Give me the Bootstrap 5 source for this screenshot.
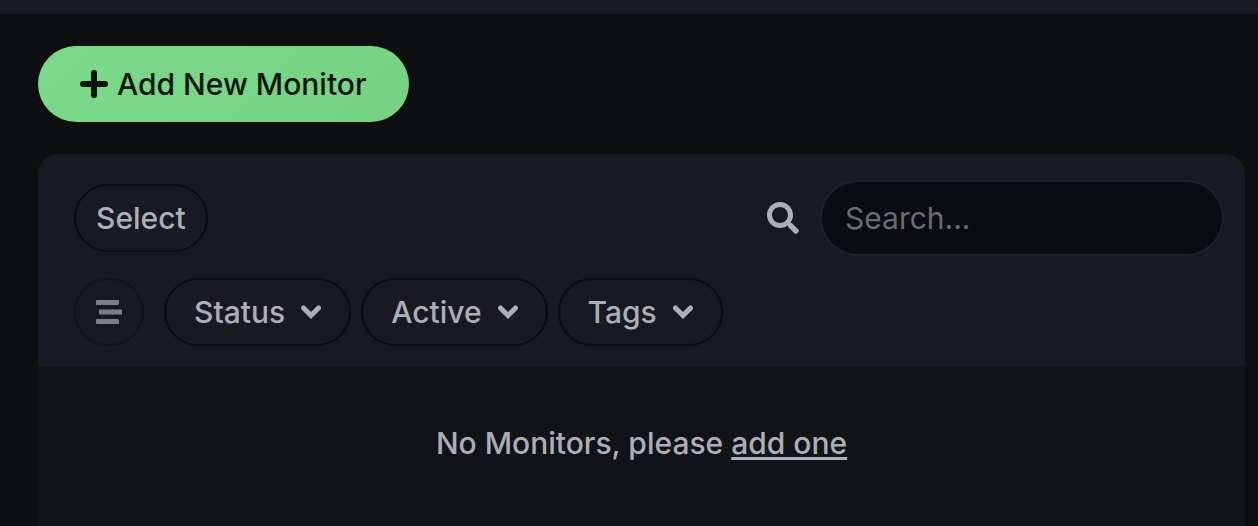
<!DOCTYPE html>
<html lang="en" data-bs-theme="dark">
<head>
<meta charset="utf-8">
<meta name="viewport" content="width=device-width, initial-scale=1">
<title>Monitors</title>
<link href="https://cdn.jsdelivr.net/npm/bootstrap@5.3.0/dist/css/bootstrap.min.css" rel="stylesheet">
<style>
  body { background: #0d0f11; color: #abafb6; font-family: Inter, "Liberation Sans", sans-serif; font-size: 30px; font-weight: 450; line-height: 48px; }
  .top-bar { height: 14px; background: #191a22; }
  .page { padding: 32px 13px 0 38px; gap: 32px; }
  .btn { font-size: 30px; font-weight: 450; line-height: 48px; }
  .btn-add { --bs-btn-color: #04140a; --bs-btn-hover-color: #04140a; --bs-btn-border-width: 0; height: 76px; padding: 0 42px; gap: 9px; background: linear-gradient(135deg, #7bd98a, #76d283); }
  .monitor-list { background: #111317; border-radius: 20px 20px 0 0; }
  .list-top { background: #191a21; padding: 26px 21px 20px 36px; border-radius: 20px 20px 0 0; }
  .btn-pill { --bs-btn-color: #abafb6; --bs-btn-hover-color: #d0d4da; --bs-btn-border-color: #0b0d10; --bs-btn-hover-border-color: #0b0d10; --bs-btn-border-width: 2px; height: 68px; padding: 0 20px; }
  .btn-filter { padding: 0 28px; gap: 16px; }
  .btn-sort { width: 70px; margin-right: 10px; padding: 0; --bs-btn-disabled-color: #7c7f85; --bs-btn-disabled-border-color: #121419; --bs-btn-disabled-opacity: 1; }
  .search-group { gap: 21px; }
  .filter-row { gap: 10px; margin-top: 22px; }
  .search-box { width: 404px; height: 76px; padding: 0 23px; border: 2px solid #202127; background: #0a0c10; color: #abafb6; font-size: 30px; }
  .search-box::placeholder { color: #696c71; }
  .empty-note { padding: 53px 0 48px; }
  .empty-note a { color: inherit; text-decoration-thickness: 3px; text-underline-offset: 3px; }
</style>
</head>
<body class="d-flex flex-column min-vh-100">
<div class="top-bar flex-shrink-0"></div>
<main class="page d-flex flex-column flex-grow-1">
  <div>
    <button type="button" class="btn btn-add rounded-pill d-inline-flex align-items-center">
      <svg width="28" height="28" viewBox="0 0 28 28" fill="none" stroke="currentColor" stroke-width="6" stroke-linecap="round" aria-hidden="true"><path d="M14 3v22M3 14h22"/></svg>
      Add New Monitor
    </button>
  </div>
  <section class="monitor-list flex-grow-1">
    <div class="list-top">
      <div class="d-flex align-items-center justify-content-between">
        <button type="button" class="btn btn-pill rounded-pill d-inline-flex align-items-center">Select</button>
        <div class="d-flex align-items-center search-group">
          <label for="search" class="d-flex" aria-label="Search">
            <svg width="32" height="32" viewBox="0 0 512 512" fill="currentColor" aria-hidden="true"><path d="M505 442.700 405.300 343c-4.500-4.500-10.600-7-17-7H372c27.600-35.300 44-79.700 44-128C416 93.100 322.900 0 208 0S0 93.100 0 208s93.100 208 208 208c48.300 0 92.700-16.400 128-44v16.300c0 6.400 2.500 12.500 7 17l99.700 99.700c9.400 9.400 24.600 9.400 33.900 0l28.300-28.300c9.400-9.400 9.400-24.600.1-34zM208 336c-70.700 0-128-57.200-128-128 0-70.700 57.200-128 128-128 70.700 0 128 57.200 128 128 0 70.700-57.200 128-128 128z"/></svg>
          </label>
          <input id="search" type="search" class="form-control search-box rounded-pill" placeholder="Search..." autocomplete="off">
        </div>
      </div>
      <div class="d-flex flex-wrap align-items-center filter-row">
        <button type="button" class="btn btn-pill btn-sort rounded-pill d-inline-flex align-items-center justify-content-center" aria-label="Sort" disabled>
          <svg width="26" height="24" viewBox="0 0 26 24" fill="currentColor" aria-hidden="true"><path d="M1 0h21q1 0 1 1v3q0 1-1 1H0V1q0-1 1-1zM3 9.500h22q1 0 1 1v4H4q-1 0-1-1zM0 19h22q1 0 1 1v3q0 1-1 1H1q-1 0-1-1z"/></svg>
        </button>
        <button type="button" class="btn btn-pill btn-filter rounded-pill d-inline-flex align-items-center">Status
          <svg width="20" height="14" viewBox="0 0 20 14" fill="none" stroke="currentColor" stroke-width="5" stroke-linecap="round" aria-hidden="true"><path d="M2.500 3l7.500 7.500L17.500 3"/></svg></button>
        <button type="button" class="btn btn-pill btn-filter rounded-pill d-inline-flex align-items-center">Active
          <svg width="20" height="14" viewBox="0 0 20 14" fill="none" stroke="currentColor" stroke-width="5" stroke-linecap="round" aria-hidden="true"><path d="M2.500 3l7.500 7.500L17.500 3"/></svg></button>
        <button type="button" class="btn btn-pill btn-filter rounded-pill d-inline-flex align-items-center">Tags
          <svg width="20" height="14" viewBox="0 0 20 14" fill="none" stroke="currentColor" stroke-width="5" stroke-linecap="round" aria-hidden="true"><path d="M2.500 3l7.500 7.500L17.500 3"/></svg></button>
      </div>
    </div>
    <p class="empty-note text-center mb-0">No Monitors, please <a href="#">add one</a></p>
  </section>
</main>
<script src="https://cdn.jsdelivr.net/npm/bootstrap@5.3.0/dist/js/bootstrap.bundle.min.js"></script>
</body>
</html>
